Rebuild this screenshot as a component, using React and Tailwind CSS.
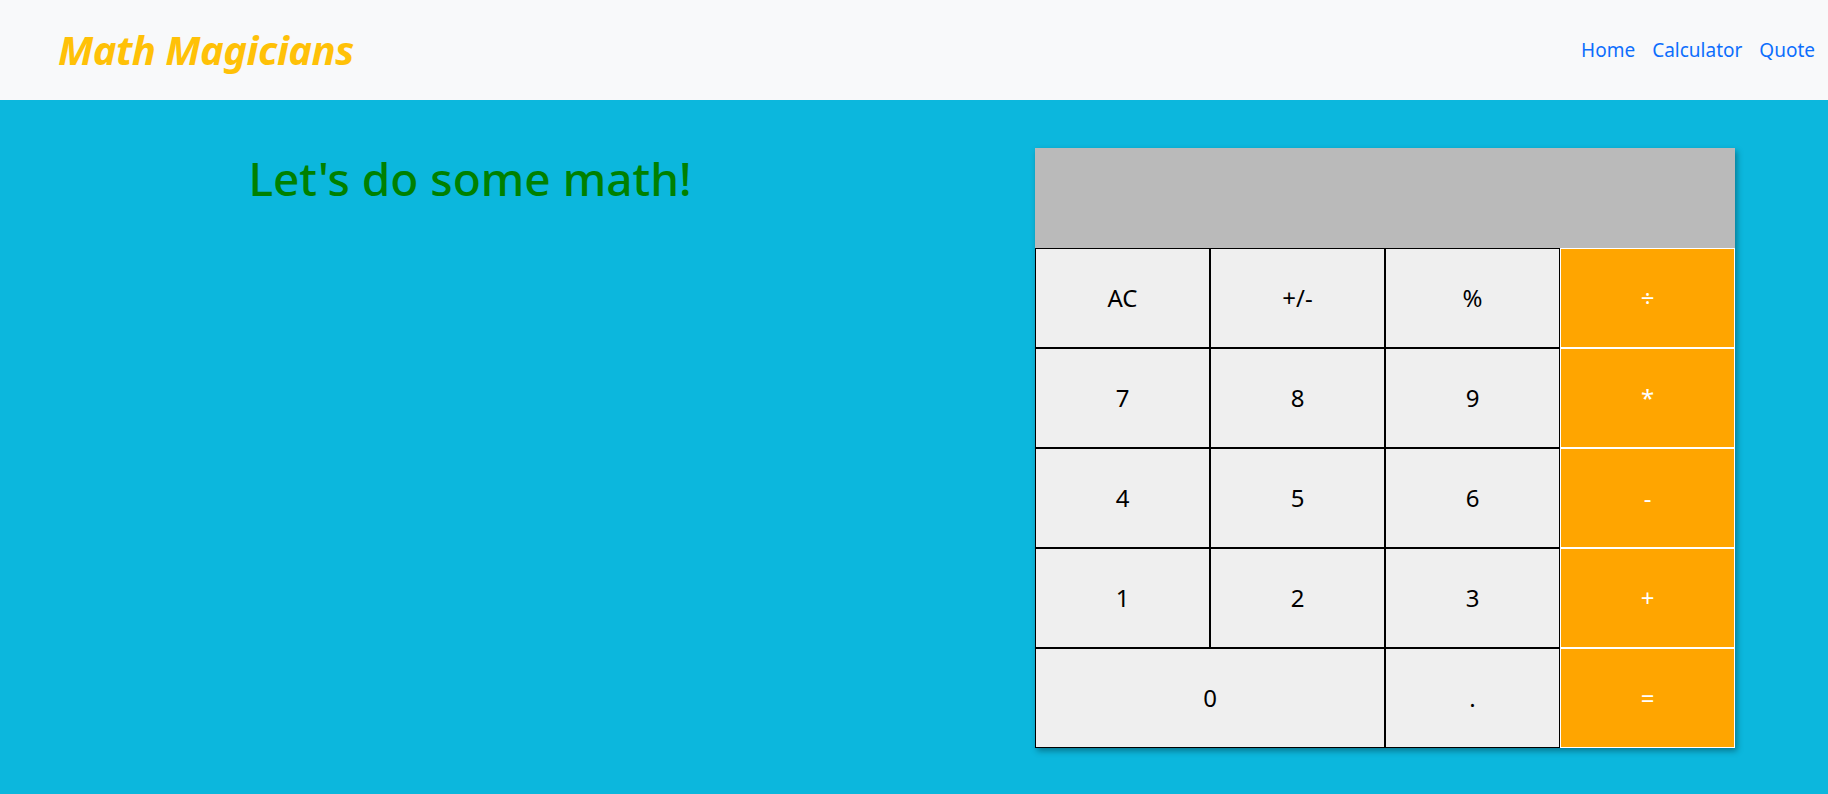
const keys = [
  { label: 'AC' },
  { label: '+/-' },
  { label: '%' },
  { label: '÷', op: true },
  { label: '7' },
  { label: '8' },
  { label: '9' },
  { label: '*', op: true },
  { label: '4' },
  { label: '5' },
  { label: '6' },
  { label: '-', op: true },
  { label: '1' },
  { label: '2' },
  { label: '3' },
  { label: '+', op: true },
  { label: '0', wide: true },
  { label: '.' },
  { label: '=', op: true },
];

function Key({ label, op, wide }) {
  return (
    <button
      type="button"
      className={`h-[100px] text-[24px] ${wide ? 'col-span-2' : ''} ${
        op ? 'bg-[#ffa500] text-white border border-white' : 'bg-[#efefef] text-black border border-black'
      }`}
    >
      {label}
    </button>
  );
}

export default function App() {
  return (
    <div className="min-h-[794px] bg-[#0cb7dd] font-['Noto_Sans',sans-serif]">
      <header className="h-[100px] bg-[#f8f9fa] flex items-center justify-between pl-[58px] pr-[13px]">
        <h1 className="text-[#ffc107] italic font-bold text-[40px] tracking-[-0.5px] leading-none">
          Math Magicians
        </h1>
        <nav className="flex items-center gap-[17px] text-[19px] text-[#0d6efd]">
          <a href="#">Home</a>
          <a href="#">Calculator</a>
          <a href="#">Quote</a>
        </nav>
      </header>

      <main className="flex items-start pt-[48px]">
        <section className="w-[940px] text-center">
          <h2 className="text-[#008000] text-[46px] font-medium leading-[1.2] mt-[3px]">
            Let's do some math!
          </h2>
        </section>

        <div className="ml-[95px] w-[700px] shadow-[2px_3px_6px_rgba(0,0,0,0.35)]">
          <div className="h-[100px] bg-[#bababa]" />
          <div className="grid grid-cols-4">
            {keys.map((k) => (
              <Key key={k.label} {...k} />
            ))}
          </div>
        </div>
      </main>
    </div>
  );
}
